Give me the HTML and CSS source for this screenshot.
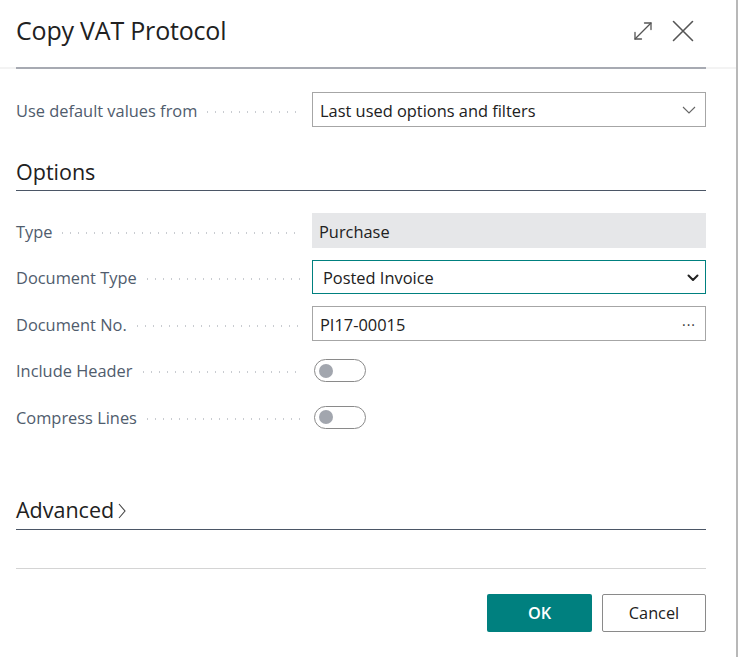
FILE: index.html
```html
<!DOCTYPE html>
<html lang="en">
<head>
<meta charset="utf-8">
<title>Copy VAT Protocol</title>
<link rel="stylesheet" href="styles.css">
</head>
<body>
<div class="dialog">
  <header class="head">
    <h1 class="title">Copy VAT Protocol</h1>
    <div class="head-actions">
      <button class="icon-btn" aria-label="Expand">
        <svg width="20" height="20" viewBox="0 0 20 20" fill="none" stroke="#555" stroke-width="1.3" stroke-linecap="round" stroke-linejoin="round">
          <path d="M2 18 L18 2"/>
          <path d="M11.5 2 H18 V8.5"/>
          <path d="M2 11.5 V18 H8.5"/>
        </svg>
      </button>
      <button class="icon-btn" aria-label="Close">
        <svg width="22" height="22" viewBox="0 0 22 22" fill="none" stroke="#555" stroke-width="1.6" stroke-linecap="round">
          <path d="M1.5 1.5 L20.5 20.5 M20.5 1.5 L1.5 20.5"/>
        </svg>
      </button>
    </div>
  </header>
  <div class="head-rule"><div class="head-rule-inner"></div></div>

  <div class="content">
    <div class="row first">
      <label class="label"><span class="label-text">Use default values from</span><span class="leader"></span></label>
      <div class="field box">
        <span class="value">Last used options and filters</span>
        <svg class="chev-thin" width="14" height="8" viewBox="0 0 14 8" fill="none" stroke="#666" stroke-width="1.1"><path d="M1 1 L7 7 L13 1"/></svg>
      </div>
    </div>

    <div class="section-head options-head"><span class="section-title">Options</span></div>

    <div class="rows">
      <div class="row">
        <label class="label"><span class="label-text">Type</span><span class="leader"></span></label>
        <div class="field readonly"><span class="value">Purchase</span></div>
      </div>
      <div class="row">
        <label class="label"><span class="label-text">Document Type</span><span class="leader"></span></label>
        <div class="field select">
          <span class="value">Posted Invoice</span>
          <svg class="chev-bold" width="12" height="8" viewBox="0 0 12 8" fill="none" stroke="#222" stroke-width="2" stroke-linecap="round" stroke-linejoin="round"><path d="M1.5 1.5 L6 6 L10.5 1.5"/></svg>
        </div>
      </div>
      <div class="row">
        <label class="label"><span class="label-text">Document No.</span><span class="leader"></span></label>
        <div class="field box">
          <span class="value">PI17-00015</span>
          <span class="more">&middot;&middot;&middot;</span>
        </div>
      </div>
      <div class="row">
        <label class="label"><span class="label-text">Include Header</span><span class="leader"></span></label>
        <div class="toggle-cell"><span class="toggle"><span class="knob"></span></span></div>
      </div>
      <div class="row">
        <label class="label"><span class="label-text">Compress Lines</span><span class="leader"></span></label>
        <div class="toggle-cell"><span class="toggle"><span class="knob"></span></span></div>
      </div>
    </div>

    <div class="section-head advanced-head">
      <span class="section-title">Advanced</span>
      <svg class="adv-chev" width="8" height="16" viewBox="0 0 8 16" fill="none" stroke="#444" stroke-width="1.1"><path d="M1 1 L7 8 L1 15"/></svg>
    </div>

    <div class="footer">
      <button class="btn primary">OK</button>
      <button class="btn secondary">Cancel</button>
    </div>
  </div>
</div>
</body>
</html>
```

FILE: styles.css
```css
* { box-sizing: border-box; }
html, body {
  margin: 0;
  padding: 0;
  background: #ffffff;
}
body {
  font-family: "Open Sans", "Noto Sans", "Liberation Sans", sans-serif;
  color: #212121;
  width: 738px;
  height: 657px;
  overflow: hidden;
}
.dialog {
  width: 738px;
  height: 657px;
  border-right: 2px solid #b8b8b8;
  background: #fff;
}
.head {
  height: 67px;
  display: flex;
  align-items: center;
  justify-content: space-between;
  padding: 0 42px 8px 16px;
}
.title {
  margin: 0;
  font-size: 25px;
  font-weight: 400;
  color: #212121;
  letter-spacing: -0.2px;
}
.head-actions {
  display: flex;
  align-items: center;
  gap: 19px;
  margin-top: 2px;
}
.icon-btn {
  border: 0;
  background: none;
  padding: 0;
  display: flex;
  cursor: pointer;
}
.head-rule {
  height: 2px;
  background: #f3f3f3;
  padding: 0 30px 0 16px;
}
.head-rule-inner {
  height: 2px;
  background: #a7aab2;
}
.content {
  padding: 23px 30px 0 16px;
}
.row {
  display: grid;
  grid-template-columns: 296px 394px;
  height: 35px;
  align-items: center;
}
.rows {
  display: flex;
  flex-direction: column;
  gap: 11.5px;
}
.label {
  display: flex;
  align-items: center;
  height: 100%;
  padding-right: 10px;
  padding-top: 1px;
  color: #505c6d;
  font-size: 16.4px;
}
.label-text {
  white-space: nowrap;
}
.leader {
  flex: 1;
  height: 2px;
  margin-left: 10px;
  margin-top: 3px;
  background-image: linear-gradient(to right, #c9ccd1 1.5px, transparent 1.5px);
  background-size: 8px 2px;
  background-repeat: repeat-x;
}
.field {
  height: 35px;
  display: flex;
  align-items: center;
  justify-content: space-between;
  padding: 1px 7px 0;
  font-size: 16.4px;
  color: #212121;
}
.box {
  border: 1px solid #a6a6a6;
}
.readonly {
  background: #e6e7e9;
}
.select {
  border: 1px solid #00807f;
  padding-left: 10px;
  padding-right: 6px;
  height: 34px;
}
.chev-thin { margin-right: 2px; }
.more {
  font-size: 14px;
  letter-spacing: 1px;
  color: #333;
  margin-right: 2px;
}
.section-head {
  display: flex;
  align-items: center;
  border-bottom: 1px solid #4b5666;
  width: 690px;
}
.options-head {
  margin-top: 24px;
  height: 40px;
  padding-top: 2px;
  margin-bottom: 22px;
}
.section-title {
  font-size: 21.5px;
  font-weight: 400;
  color: #212121;
}
.advanced-head {
  margin-top: 55px;
  height: 41px;
  padding-top: 1px;
  gap: 4px;
}
.adv-chev { margin-top: 3px; }
.toggle-cell {
  display: flex;
  align-items: center;
  height: 35px;
  padding-left: 2px;
  padding-top: 1px;
}
.toggle {
  width: 52px;
  height: 23px;
  border: 1px solid #8a8a8a;
  border-radius: 12px;
  display: flex;
  align-items: center;
  padding-left: 4px;
}
.knob {
  width: 14px;
  height: 14px;
  border-radius: 50%;
  background: #a2a6ae;
}
.footer {
  margin-top: 38px;
  border-top: 1px solid #d4d4d4;
  width: 690px;
  padding-top: 25px;
  display: flex;
  justify-content: flex-end;
  gap: 10px;
}
.btn {
  height: 38px;
  border-radius: 2px;
  font-family: inherit;
  font-size: 16.3px;
  cursor: pointer;
}
.primary {
  width: 105px;
  background: #00807f;
  color: #fff;
  border: 0;
  font-weight: 600;
}
.secondary {
  width: 104px;
  background: #fff;
  color: #212121;
  border: 1px solid #8a8a8a;
}
```
